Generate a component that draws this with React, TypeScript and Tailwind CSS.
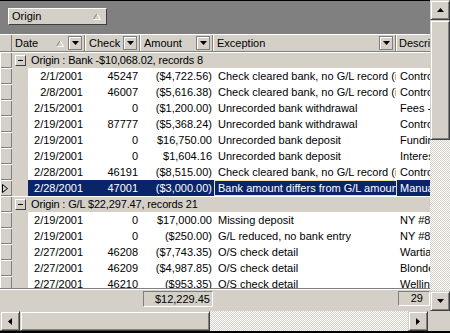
import React from "react";

const SCROLLBTN =
  "bg-[#d4d0c8] border border-t-[#d4d0c8] border-l-[#d4d0c8] border-r-[#404040] border-b-[#404040] shadow-[inset_1px_1px_#ffffff,inset_-1px_-1px_#808080] flex items-center justify-center";

const TRACK =
  "bg-[image:repeating-conic-gradient(#ffffff_0%_25%,#d4d0c8_0%_50%)] bg-[length:2px_2px]";

type Row = { d: string; c: string; a: string; e: string; s: string; sel?: boolean };

const bank: Row[] = [
  { d: "2/1/2001", c: "45247", a: "($4,722.56)", e: "Check cleared bank, no G/L record (i", s: "Control" },
  { d: "2/8/2001", c: "46007", a: "($5,616.38)", e: "Check cleared bank, no G/L record (i", s: "Control" },
  { d: "2/15/2001", c: "0", a: "($1,200.00)", e: "Unrecorded bank withdrawal", s: "Fees - bank" },
  { d: "2/19/2001", c: "87777", a: "($5,368.24)", e: "Unrecorded bank withdrawal", s: "Control" },
  { d: "2/19/2001", c: "0", a: "$16,750.00", e: "Unrecorded bank deposit", s: "Funding" },
  { d: "2/19/2001", c: "0", a: "$1,604.16", e: "Unrecorded bank deposit", s: "Interest" },
  { d: "2/28/2001", c: "46191", a: "($8,515.00)", e: "Check cleared bank, no G/L record (i", s: "Control" },
  { d: "2/28/2001", c: "47001", a: "($3,000.00)", e: "Bank amount differs from G/L amount", s: "Manual", sel: true },
];

const gl: Row[] = [
  { d: "2/19/2001", c: "0", a: "$17,000.00", e: "Missing deposit", s: "NY #8" },
  { d: "2/19/2001", c: "0", a: "($250.00)", e: "G/L reduced, no bank entry", s: "NY #8" },
  { d: "2/27/2001", c: "46208", a: "($7,743.35)", e: "O/S check detail", s: "Wartian" },
  { d: "2/27/2001", c: "46209", a: "($4,987.85)", e: "O/S check detail", s: "Blondel" },
  { d: "2/27/2001", c: "46210", a: "($953.35)", e: "O/S check detail", s: "Wellington" },
];

function Selector({ sel }: { sel?: boolean }) {
  return (
    <div className="w-[12px] h-[16px] shrink-0 bg-[#d4d0c8] shadow-[inset_1px_1px_#ffffff,inset_-1px_-1px_#808080] flex items-center pl-[2px]">
      {sel && (
        <svg width="6" height="9" viewBox="0 0 6 9">
          <polygon points="0.5,0.5 5.5,4.5 0.5,8.5" fill="none" stroke="#000" strokeWidth="1" />
        </svg>
      )}
    </div>
  );
}

function GroupRow({ text }: { text: string }) {
  return (
    <div className="flex h-[16px]">
      <Selector />
      <div className="flex-1 bg-[#d4d0c8] shadow-[inset_0_1px_#ffffff] flex items-center pl-[3px]">
        <div className="w-[11px] h-[11px] bg-[#d4d0c8] border border-t-[#ffffff] border-l-[#ffffff] border-r-[#404040] border-b-[#404040] flex items-center justify-center">
          <div className="w-[5px] h-[1px] bg-black" />
        </div>
        <span className="ml-[5px] whitespace-nowrap tracking-[-0.15px]">{text}</span>
      </div>
    </div>
  );
}

function DataRow({ r }: { r: Row }) {
  return (
    <div className="flex h-[16px]">
      <Selector sel={r.sel} />
      <div className="w-[16px] shrink-0 bg-[#d4d0c8]" />
      <div className={`flex flex-1 items-center ${r.sel ? "bg-[#0a246a] text-white" : "bg-white text-black"}`}>
        <div className="w-[58px] shrink-0 text-right pr-[3px] whitespace-nowrap">{r.d}</div>
        <div className="w-[55px] shrink-0 text-right pr-[3px] whitespace-nowrap">{r.c}</div>
        <div className="w-[73px] shrink-0 text-right pr-[2px] whitespace-nowrap">{r.a}</div>
        <div
          className={`w-[183px] h-[16px] shrink-0 pl-[3px] overflow-hidden whitespace-nowrap leading-[14px] border ${
            r.sel ? "border-[#f0e2a8]" : "border-transparent"
          }`}
        >
          {r.e}
        </div>
        <div className="flex-1 pl-[3px] overflow-hidden whitespace-nowrap">{r.s}</div>
      </div>
    </div>
  );
}

function DropBtn() {
  return (
    <div className="w-[14px] h-[14px] shrink-0 bg-[#d4d0c8] border border-[#808080] shadow-[inset_1px_1px_#ffffff] flex items-center justify-center">
      <svg width="7" height="4" viewBox="0 0 7 4">
        <polygon points="0,0 7,0 3.5,4" fill="#000" />
      </svg>
    </div>
  );
}

function SortUp() {
  return (
    <svg width="8" height="7" viewBox="0 0 8 7" className="shrink-0">
      <line x1="4" y1="0.5" x2="0.5" y2="6.5" stroke="#808080" strokeWidth="1" />
      <line x1="4" y1="0.5" x2="7.5" y2="6.5" stroke="#ffffff" strokeWidth="1" />
      <line x1="0.5" y1="6.5" x2="7.5" y2="6.5" stroke="#ffffff" strokeWidth="1" />
    </svg>
  );
}

function HeadCell({ w, label, sort }: { w: string; label: string; sort?: boolean }) {
  return (
    <div className={`${w} h-full shrink-0 flex items-center`}>
      <span className="pl-[3px] whitespace-nowrap">{label}</span>
      <div className="flex-1" />
      {sort && (
        <div className="mr-[4px]">
          <SortUp />
        </div>
      )}
      <DropBtn />
      <div className="w-[2px] h-full ml-[2px] border-l border-l-[#808080] border-r border-r-[#ffffff]" />
    </div>
  );
}

export default function App() {
  return (
    <div className="w-[450px] h-[333px] overflow-hidden bg-[#d4d0c8] font-['Liberation_Sans',Arial,sans-serif] text-[11px] text-black flex flex-col">
      <div className="flex h-[311px]">
        <div className="w-[430px] flex flex-col">
          {/* group-by panel */}
          <div className="h-[34px] shrink-0 bg-[#808080] border-t border-t-[#000000] pt-[7px] pl-[8px]">
            <div className="w-[99px] h-[17px] bg-[#d4d0c8] border border-t-[#ffffff] border-l-[#ffffff] border-r-[#404040] border-b-[#404040] flex items-center pl-[3px] pr-[5px]">
              <span>Origin</span>
              <div className="flex-1" />
              <SortUp />
            </div>
          </div>
          {/* header */}
          <div className="h-[18px] shrink-0 flex bg-[#d4d0c8] border-t border-t-[#ffffff] border-b border-b-[#808080]">
            <div className="w-[12px] h-full shrink-0 border-r border-r-[#808080]" />
            <HeadCell w="w-[74px]" label="Date" sort />
            <HeadCell w="w-[55px]" label="Check" />
            <HeadCell w="w-[73px]" label="Amount" />
            <HeadCell w="w-[183px]" label="Exception" />
            <div className="flex-1 h-full flex items-center overflow-hidden">
              <span className="pl-[2px] whitespace-nowrap">Description</span>
            </div>
          </div>
          {/* body */}
          <div className="flex-1 overflow-hidden bg-white">
            <GroupRow text="Origin : Bank -$10,068.02, records 8" />
            {bank.map((r, i) => (
              <DataRow key={"b" + i} r={r} />
            ))}
            <GroupRow text="Origin : G/L $22,297.47, records 21" />
            {gl.map((r, i) => (
              <DataRow key={"g" + i} r={r} />
            ))}
          </div>
          {/* footer */}
          <div className="h-[23px] shrink-0 bg-[#d4d0c8] border-t border-t-[#808080] shadow-[inset_0_1px_#ffffff] flex items-start pt-[2px]">
            <div className="ml-[143px] w-[70px] h-[16px] border border-t-[#808080] border-l-[#808080] border-r-[#ffffff] border-b-[#ffffff] text-right pr-[2px] leading-[14px]">
              $12,229.45
            </div>
            <div className="ml-[185px] w-[32px] h-[15px] border border-t-[#808080] border-l-[#808080] border-r-[#ffffff] border-b-[#ffffff] text-right pr-[6px] leading-[13px]">
              29
            </div>
          </div>
        </div>
        {/* vertical scrollbar */}
        <div className="w-[20px] flex flex-col">
          <div className={`h-[20px] shrink-0 ${SCROLLBTN}`}>
            <svg width="7" height="4" viewBox="0 0 7 4">
              <polygon points="3.5,0 7,4 0,4" fill="#000" />
            </svg>
          </div>
          <div className={`h-[120px] shrink-0 ${SCROLLBTN}`} />
          <div className={`flex-1 ${TRACK}`} />
          <div className={`h-[20px] shrink-0 ${SCROLLBTN}`}>
            <svg width="7" height="4" viewBox="0 0 7 4">
              <polygon points="0,0 7,0 3.5,4" fill="#000" />
            </svg>
          </div>
        </div>
      </div>
      {/* horizontal scrollbar */}
      <div className="flex h-[20px] shrink-0">
        <div className={`w-[20px] shrink-0 ${SCROLLBTN}`}>
          <svg width="4" height="7" viewBox="0 0 4 7">
            <polygon points="4,0 4,7 0,3.5" fill="#000" />
          </svg>
        </div>
        <div className={`w-[190px] shrink-0 ${SCROLLBTN}`} />
        <div className={`flex-1 ${TRACK}`} />
        <div className={`w-[20px] shrink-0 ${SCROLLBTN}`}>
          <svg width="4" height="7" viewBox="0 0 4 7">
            <polygon points="0,0 4,3.5 0,7" fill="#000" />
          </svg>
        </div>
        <div className="w-[22px] shrink-0 bg-[#d4d0c8]" />
      </div>
      <div className="flex-1 bg-black" />
    </div>
  );
}
